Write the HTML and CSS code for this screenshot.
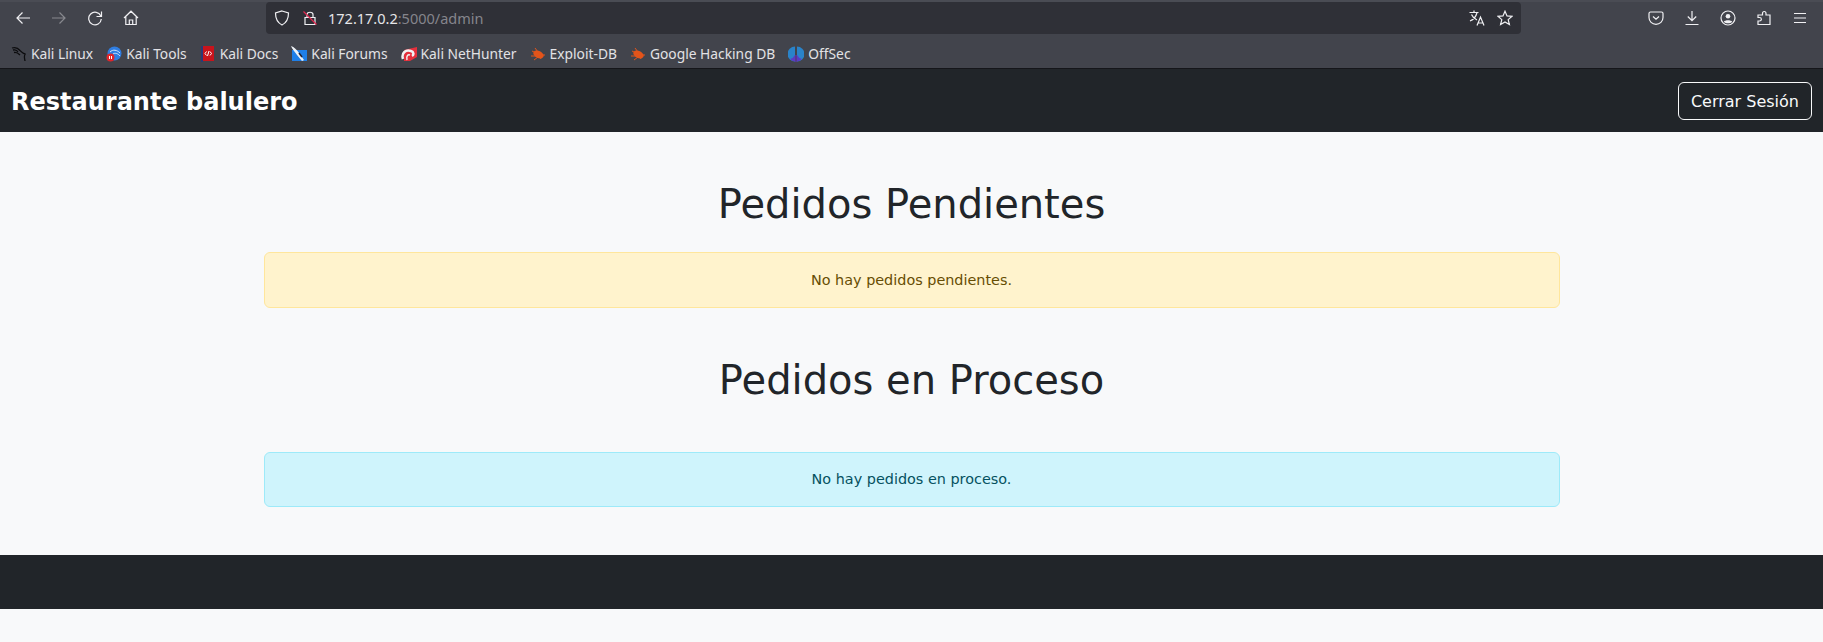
FILE: index.html
```html
<!DOCTYPE html>
<html lang="en">
<head>
    <meta charset="UTF-8">
    <meta name="viewport" content="width=device-width, initial-scale=1.0">
    <title>Restaurante balulero</title>
    <link rel="stylesheet" href="styles.css">
</head>
<body>

<div class="browser-bar">
    <div class="nav-icons">
        <svg class="icon" viewBox="0 0 16 16"><path d="M15 8H2M7.5 2.5L2 8l5.500 5.500"/></svg>
        <svg class="icon dim" viewBox="0 0 16 16"><path d="M1 8h13M8.500 2.500L14 8l-5.500 5.500"/></svg>
        <svg class="icon" viewBox="0 0 16 16"><path d="M13.800 6A6.300 6.300 0 1 0 14.300 9M14.500 1.500V6.500H9.500"/></svg>
        <svg class="icon" viewBox="0 0 16 16"><path d="M1 8L8 1.200 15 8M2.800 6.500V14.500H13.200V6.500M6.300 14.500V10H9.700V14.500"/></svg>
    </div>
    <div class="url-bar">
        <svg class="icon shield" viewBox="0 0 16 16"><path d="M8 1L14.500 3C14.500 9 13 12.500 8 15 3 12.500 1.500 9 1.500 3z"/></svg>
        <svg class="icon lock" viewBox="0 0 16 16"><path d="M3 7.500H13V14.500H3zM5 7.500V4.500C5 1.500 11 1.500 11 4.500V7.500"/><path class="slash" d="M1.500 1.500L14.500 14.500"/></svg>
        <span class="url"><span class="url-host">172.17.0.2</span>:5000/admin</span>
        <svg class="icon translate" viewBox="0 0 16 16"><path d="M.5 2.500H9.500M5 .5V2.500M8 2.500C7 7 4.500 9.500 1 11M2.500 4.500C3.500 7 6 9 8 10M8 15.500L11.500 7 15 15.500M9.300 13H13.700"/></svg>
        <svg class="icon star" viewBox="0 0 16 16"><path d="M8 1.200L10 5.900 15 6.300 11.200 9.600 12.400 14.600 8 11.900 3.600 14.600 4.800 9.600 1 6.300 6 5.900z"/></svg>
    </div>
    <div class="tool-icons">
        <svg class="icon" viewBox="0 0 16 16"><path d="M2.500 2H13.500Q15 2 15 3.500V7.500A7 6.800 0 0 1 1 7.500V3.500Q1 2 2.500 2zM5 6.500L8 9.300 11 6.500"/></svg>
        <svg class="icon" viewBox="0 0 16 16"><path d="M8 1V10.500M3.800 6.500L8 10.700 12.200 6.500M1.500 14.500H14.500"/></svg>
        <svg class="icon" viewBox="0 0 16 16"><circle cx="8" cy="8" r="7"/><circle class="solid" cx="8" cy="6.200" r="2.300"/><path class="solid" d="M3.800 11.800C5 9.800 11 9.800 12.200 11.800 10 13.800 6 13.800 3.800 11.800z"/></svg>
        <svg class="icon" viewBox="0 0 16 16"><path d="M2 5H6.500V3.500C6.500 .8 10 .8 10 3.500V5H14V14.500H2V11H3.500C6 11 6 7.500 3.500 7.500H2z"/></svg>
        <svg class="icon" viewBox="0 0 16 16"><path d="M2 3.500H14M2 8H14M2 12.500H14"/></svg>
    </div>
</div>

<div class="bookmarks">
    <a class="bookmark">
        <svg class="favicon" viewBox="0 0 16 16"><path class="kali-line" d="M1 2C4 1 7 2 9 4.500 11 6.500 13 8 14.500 8 12.500 9 13.500 12 14 15M2 4C4 3.500 6 4 7 6M3 6.500C5 6 7 7 9 9"/></svg>
        Kali Linux
    </a>
    <a class="bookmark">
        <svg class="favicon" viewBox="0 0 16 16"><circle cx="8.500" cy="7.500" r="7" fill="#2f7de1"/><path d="M4 6C7 3 11 4 14 7M7 8C9 6.500 12 7.500 14 10" fill="none" stroke="#d5e6fb" stroke-width="1"/><circle cx="4.500" cy="11.500" r="4" fill="#e0262b"/><path d="M3.500 10V13M5.500 10V13" stroke="#fff" stroke-width="1"/></svg>
        Kali Tools
    </a>
    <a class="bookmark">
        <svg class="favicon" viewBox="0 0 16 16"><rect x="1" y="0" width="13" height="15" fill="#c8141c"/><rect x="1" y="0" width="2" height="16" fill="#2b3a78"/><path d="M6.500 5.500L5 7.500 6.500 9.500M10 5.500L11.500 7.500 10 9.500M9 5L7.500 10" fill="none" stroke="#fff" stroke-width="1"/></svg>
        Kali Docs
    </a>
    <a class="bookmark">
        <svg class="favicon" viewBox="0 0 16 16"><path d="M1 4H16V15H1z" fill="#1f7fe8"/><path d="M0 0C3 1 6 4 8 7L13 14 11 15 6 9C4 6 1 3 0 0z" fill="#eef2f6"/><path d="M8 7L11 11" stroke="#223" stroke-width="1.500"/></svg>
        Kali Forums
    </a>
    <a class="bookmark">
        <svg class="favicon" viewBox="0 0 16 16"><path d="M3 4L16 1V11L9 15H3z" fill="#e5303c"/><path d="M2 13C0 7 5 3 10 5 13 6 13 9 11 10" fill="none" stroke="#f2f2f2" stroke-width="2.500"/><path d="M6 14C5 10 7 8 9 9" fill="none" stroke="#f2f2f2" stroke-width="1.500"/></svg>
        Kali NetHunter
    </a>
    <a class="bookmark">
        <svg class="favicon" viewBox="0 0 16 16"><ellipse class="bug" cx="8.500" cy="8.500" rx="5.500" ry="3.500" transform="rotate(25 8.500 8.500)"/><path class="bug-legs" d="M2 5L6 7M1 10H6M4 14L8 11M11 13L10 11M15 9L12 9M5 2L8 6"/></svg>
        Exploit-DB
    </a>
    <a class="bookmark">
        <svg class="favicon" viewBox="0 0 16 16"><ellipse class="bug" cx="8.500" cy="8.500" rx="5.500" ry="3.500" transform="rotate(25 8.500 8.500)"/><path class="bug-legs" d="M2 5L6 7M1 10H6M4 14L8 11M11 13L10 11M15 9L12 9M5 2L8 6"/></svg>
        Google Hacking DB
    </a>
    <a class="bookmark">
        <svg class="favicon" viewBox="0 0 16 16"><path d="M7 .5A7.500 7.500 0 0 0 7 15.500z" fill="#2a83c9"/><path d="M9 .5A7.500 7.500 0 0 1 9 15.500z" fill="#2a83c9"/><path d="M7 9A7.500 7.500 0 0 1 2 13 7.500 7.500 0 0 0 7 15.500zM9 9A7.500 7.500 0 0 0 14 13 7.500 7.500 0 0 1 9 15.500z" fill="#5a3bc4"/><path d="M8 9V16" stroke="#6a2fd0" stroke-width="1"/></svg>
        OffSec
    </a>
</div>

<nav class="navbar">
    <span class="brand">Restaurante balulero</span>
    <button class="logout" type="button">Cerrar Sesión</button>
</nav>

<main class="container">
    <h2 class="section-title">Pedidos Pendientes</h2>
    <div class="alert alert-warning">No hay pedidos pendientes.</div>
    <h2 class="section-title second">Pedidos en Proceso</h2>
    <div class="alert alert-info">No hay pedidos en proceso.</div>
</main>

<footer class="footer"></footer>

</body>
</html>
```

FILE: styles.css
```css
* {
    box-sizing: border-box;
}

html,
body {
    height: 100%;
}

body {
    margin: 0;
    overflow: hidden;
    background-color: #f8f9fa;
    font-family: "DejaVu Sans", sans-serif;
    color: #212529;
}

/* browser window */
.browser-bar {
    display: flex;
    align-items: center;
    height: 34px;
    background-color: #42444c;
    border-top: 2px solid #4a4c54;
}

.icon {
    width: 16px;
    height: 16px;
    fill: none;
    stroke: #f0f0f3;
    stroke-width: 1.2;
    flex-shrink: 0;
}

.icon .solid {
    fill: #f0f0f3;
    stroke: none;
}

.icon.dim {
    opacity: 0.4;
}

.nav-icons {
    display: flex;
    gap: 20px;
    width: 266px;
    padding-left: 15px;
}

.url-bar {
    display: flex;
    align-items: center;
    width: 1255px;
    height: 32px;
    padding: 0 8px;
    background-color: #2f3037;
    border-radius: 4px;
}

.shield {
    margin-right: 12px;
}

.lock {
    margin-right: 10px;
}

.lock .slash {
    stroke: #e22850;
}

.url {
    flex: 1;
    font-family: "Noto Sans", sans-serif;
    font-size: 14.5px;
    color: #85858c;
}

.url-host {
    color: #e6e6e9;
}

.translate {
    margin-right: 12px;
}

.tool-icons {
    display: flex;
    gap: 20px;
    margin-left: 127px;
}

.bookmarks {
    display: flex;
    align-items: center;
    gap: 13px;
    height: 35px;
    padding: 5px 0 0 11px;
    background-color: #42444c;
    border-bottom: 1px solid #15161a;
    font-family: "Noto Sans", sans-serif;
    font-size: 13.800px;
    color: #e2e2e5;
}

.bookmark {
    display: flex;
    align-items: center;
    gap: 4px;
    white-space: nowrap;
}

.favicon {
    width: 16px;
    height: 16px;
    flex-shrink: 0;
}

.kali-line {
    fill: none;
    stroke: #0c0c0e;
    stroke-width: 1.300;
}

.bug {
    fill: #e4541a;
}

.bug-legs {
    fill: none;
    stroke: #e4541a;
    stroke-width: 1;
}

/* page */
.navbar {
    display: flex;
    align-items: center;
    justify-content: space-between;
    height: 63px;
    padding: 1px 11px 0;
    background-color: #212529;
}

.brand {
    padding-top: 2px;
    font-size: 24px;
    font-weight: bold;
    color: #fff;
}

.logout {
    height: 38px;
    padding: 0 12px;
    background: transparent;
    border: 1px solid #f8f9fa;
    border-radius: 6px;
    font-family: inherit;
    font-size: 16px;
    color: #f8f9fa;
}

.container {
    width: 1296px;
    margin: 0 auto;
    height: 423px;
    padding-top: 48px;
    text-align: center;
}

.section-title {
    margin: 0 0 24px;
    font-size: 40px;
    font-weight: 400;
    line-height: 48px;
}

.section-title.second {
    margin-bottom: 48px;
}

.alert {
    height: 56px;
    margin-bottom: 48px;
    border: 1px solid transparent;
    border-radius: 6px;
    font-size: 14.400px;
    line-height: 54px;
}

.alert-warning {
    background-color: #fff3cd;
    border-color: #ffe69c;
    color: #664d03;
}

.alert-info {
    height: 55px;
    line-height: 53px;
    background-color: #cff4fc;
    border-color: #9eeaf9;
    color: #055160;
}

.footer {
    height: 54px;
    background-color: #212529;
}
```
